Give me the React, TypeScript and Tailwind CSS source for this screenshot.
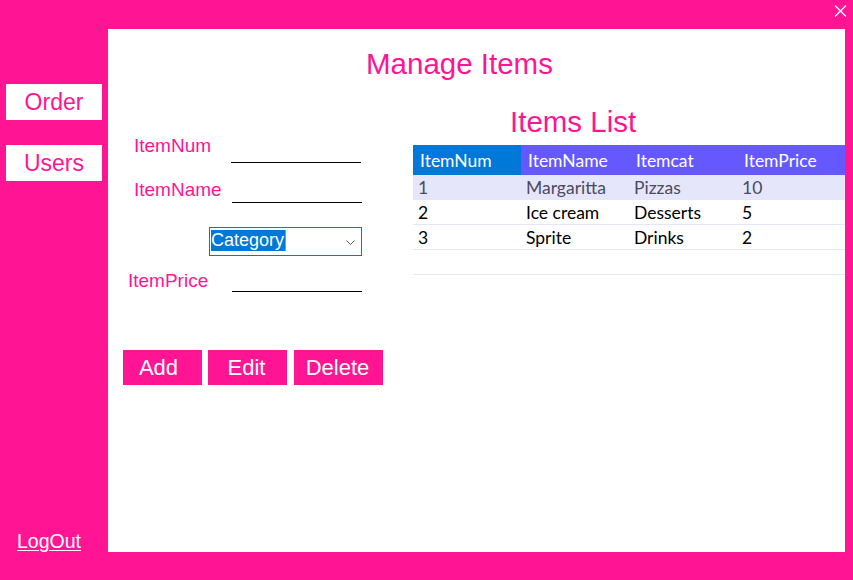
import React from "react";

const rows = [
  { n: "1", name: "Margaritta", cat: "Pizzas", price: "10", sel: true },
  { n: "2", name: "Ice cream", cat: "Desserts", price: "5", sel: false },
  { n: "3", name: "Sprite", cat: "Drinks", price: "2", sel: false },
];

export default function App() {
  return (
    <div className="relative flex h-[580px] w-[853px] bg-[#ff1493] font-['Liberation_Sans',Arial,sans-serif]">
      {/* close */}
      <svg className="absolute left-[834px] top-[5px]" width="13" height="12" viewBox="0 0 13 12">
        <path d="M1 0.5 L12 11.5 M12 0.5 L1 11.5" stroke="white" strokeWidth="1.3" fill="none" />
      </svg>

      {/* sidebar */}
      <div className="flex w-[108px] shrink-0 flex-col pb-[28px] pl-[6px] pt-[84px]">
        <div className="flex h-[36px] w-[96px] items-center justify-center bg-white text-[23px] leading-[26px] text-[#ff1493]">
          Order
        </div>
        <div className="mt-[25px] flex h-[36px] w-[96px] items-center justify-center bg-white text-[23px] leading-[26px] text-[#ff1493]">
          Users
        </div>
        <div className="mt-auto pl-[11px] text-[19.5px] leading-[22px] text-white underline decoration-1 underline-offset-[2px]">
          LogOut
        </div>
      </div>

      {/* main */}
      <div className="flex-1 pb-[28px] pr-[9px] pt-[29px]">
        <div className="flex h-full flex-col overflow-hidden bg-white">
          <div className="pl-[258px] pt-[18px] text-[29.5px] leading-[33px] text-[#ff1493]">Manage Items</div>
          <div className="flex">
            {/* form */}
            <div className="w-[305px] shrink-0 pt-[54px]">
              <div className="flex">
                <div className="w-[123px] pl-[26px] text-[19px] leading-[23px] text-[#ff1493]">ItemNum</div>
                <div className="mt-[1px] h-[28px] w-[130px] border-b border-black" />
              </div>
              <div className="mt-[15px] flex">
                <div className="w-[124px] pl-[26px] text-[19px] leading-[23px] text-[#ff1493]">ItemName</div>
                <div className="h-[25px] w-[130px] border-b border-black" />
              </div>
              <div className="ml-[101px] mt-[24px] flex h-[29px] w-[153px] items-start border border-[#0078d7] pl-[1px] pt-[2px]">
                <span className="border-r border-[#d98a3a] bg-[#0078d7] pr-[1px] text-[18px] leading-[21px] text-white">
                  Category
                </span>
                <svg className="ml-auto mr-[6px] mt-[10px]" width="9" height="5" viewBox="0 0 9 5">
                  <path d="M0.5 0.5 L4.5 4.5 L8.5 0.5" stroke="#555" strokeWidth="1" fill="none" />
                </svg>
              </div>
              <div className="mt-[13px] flex">
                <div className="w-[124px] pl-[20px] text-[19px] leading-[23px] text-[#ff1493]">ItemPrice</div>
                <div className="h-[23px] w-[130px] border-b border-black" />
              </div>
              <div className="mt-[58px] flex pl-[15px]">
                <div className="flex h-[35px] w-[79px] items-center justify-center bg-[#ff1493] pr-[8px] text-[22px] text-white">Add</div>
                <div className="ml-[6px] flex h-[35px] w-[79px] items-center justify-center bg-[#ff1493] pr-[2px] text-[22px] text-white">Edit</div>
                <div className="ml-[7px] flex h-[35px] w-[89px] items-center justify-center bg-[#ff1493] pr-[2px] text-[22px] text-white">Delete</div>
              </div>
            </div>

            {/* table */}
            <div className="min-w-0 flex-1 pt-[25px]">
              <div className="pl-[97px] text-[29.5px] leading-[33px] text-[#ff1493]">Items List</div>
              <div className="mt-[7px] w-[432px] font-['Lato',sans-serif] text-[17.5px]">
                <div className="flex h-[30px] bg-[#6658ff] text-white">
                  <div className="w-[108px] bg-[#0078d7] pl-[7px] pt-[6px] leading-[20px]">ItemNum</div>
                  <div className="w-[108px] pl-[7px] pt-[6px] leading-[20px]">ItemName</div>
                  <div className="w-[108px] pl-[7px] pt-[6px] leading-[20px]">Itemcat</div>
                  <div className="w-[108px] pl-[7px] pt-[6px] leading-[20px]">ItemPrice</div>
                </div>
                {rows.map((r) => (
                  <div
                    key={r.n}
                    className={
                      r.sel
                        ? "flex h-[25px] border-b border-[#e6e6fa] bg-[#e6e6fa] text-[#4a4a64]"
                        : "flex h-[25px] border-b border-[#e6e6fa] text-black"
                    }
                  >
                    <div className="w-[108px] pl-[5px] pt-[3px] leading-[20px]">{r.n}</div>
                    <div className="w-[108px] pl-[5px] pt-[3px] leading-[20px]">{r.name}</div>
                    <div className="w-[108px] pl-[5px] pt-[3px] leading-[20px]">{r.cat}</div>
                    <div className="w-[108px] pl-[5px] pt-[3px] leading-[20px]">{r.price}</div>
                  </div>
                ))}
                <div className="h-[25px] border-b border-[#e6e6fa]" />
              </div>
            </div>
          </div>
        </div>
      </div>
    </div>
  );
}
